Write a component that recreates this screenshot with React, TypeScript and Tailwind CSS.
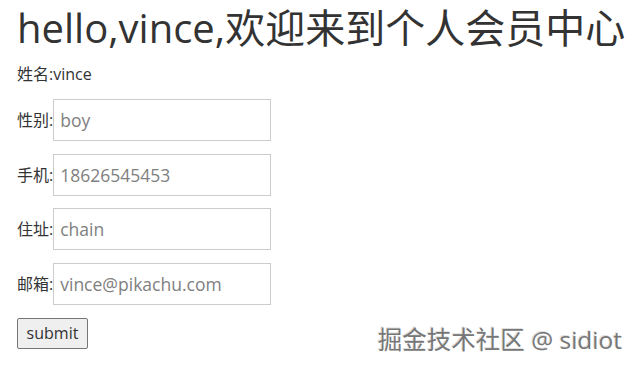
const FIELDS = [
  { label: '性别:', value: 'boy' },
  { label: '手机:', value: '18626545453' },
  { label: '住址:', value: 'chain' },
  { label: '邮箱:', value: 'vince@pikachu.com' },
]

const FONT = "font-['Open_Sans','Noto_Sans_CJK_SC',sans-serif]"

export default function App() {
  return (
    <div className={`relative h-[369px] w-[635px] bg-white pl-[17px] text-[#333] ${FONT}`}>
      <h1 className="pt-[4px] text-[40px] leading-[48px]">hello,vince,欢迎来到个人会员中心</h1>
      <p className="mt-[11px] text-[16px] leading-[22px]">姓名:vince</p>
      <div className="mt-[14px] flex flex-col gap-[12.5px]">
        {FIELDS.map((f) => (
          <div key={f.label} className="flex items-center text-[16px]">
            <span className="shrink-0 whitespace-nowrap">{f.label}</span>
            <input
              readOnly
              defaultValue={f.value}
              className="h-[42px] w-[218px] shrink-0 border border-[#ccc] px-[6px] text-[17.5px] text-[#808080] outline-none"
            />
          </div>
        ))}
      </div>
      <button className="mt-[13px] h-[31px] w-[71px] rounded-[2px] border border-[#767676] bg-[#efefef] text-[16px] text-[#333]">
        submit
      </button>
      <div className="absolute bottom-[14px] right-[13px] text-[24.5px] leading-[30px] text-[#777] [text-shadow:1px_1px_0_#fff,-1px_-1px_0_#e0e0e0]">
        掘金技术社区 @ sidiot
      </div>
    </div>
  )
}
